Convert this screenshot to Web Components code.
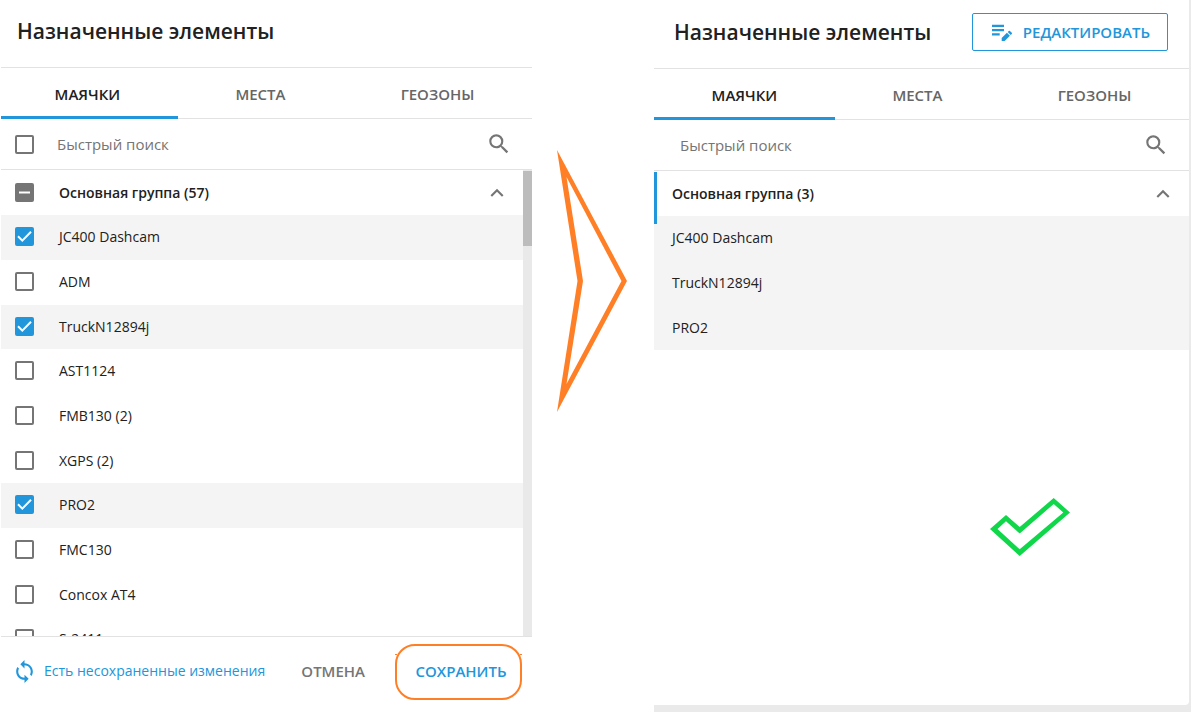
<!DOCTYPE html>
<html lang="ru">
<head>
<meta charset="utf-8">
<title>Назначенные элементы</title>
<style>
  html { --blue: #2196db; --ink: #212121; --muted: #757575; --line: #e2e2e2; --mark: #ff7f27; }
  body { margin: 0; background: #fff; color: var(--ink); font: 14px/20px "Open Sans", "Noto Sans", sans-serif; }
</style>
</head>
<body>
<assign-page></assign-page>

<script>
const ICONS = {
  search: '<path d="M15.5 14h-.79l-.28-.27A6.47 6.47 0 0 0 16 9.5 6.5 6.5 0 1 0 9.5 16c1.61 0 3.09-.59 4.23-1.57l.27.28v.79l5 4.99L20.49 19l-4.99-5zm-6 0C7.01 14 5 11.99 5 9.5S7.01 5 9.5 5 14 7.01 14 9.5 11.99 14 9.5 14z"/>',
  up: '<path d="M12 8l-6 6 1.41 1.41L12 10.83l4.59 4.58L18 14z"/>',
  sync: '<path d="M12 4V1L8 5l4 4V6c3.31 0 6 2.69 6 6 0 1.01-.25 1.97-.7 2.8l1.46 1.46C19.54 15.03 20 13.57 20 12c0-4.42-3.58-8-8-8zm0 14c-3.31 0-6-2.69-6-6 0-1.01.25-1.97.7-2.8L5.24 7.74C4.46 8.97 4 10.43 4 12c0 4.42 3.58 8 8 8v3l4-4-4-4v3z"/>',
  edit: '<path d="M2 4.800h12v2.200H2zM2 9h12v2.200H2zM2 13.200h7.700v2.200H2zM11.700 18v3h3l5.200-5.200-3-3zM21.800 13.900a.8.8 0 0 0 0-1.100l-1.900-1.900a.8.8 0 0 0-1.100 0l-1.100 1.100 3 3z"/>'
};

class UiElement extends HTMLElement {
  connectedCallback() {
    if (this.shadowRoot) return;
    this.attachShadow({ mode: 'open' }).innerHTML = this.render();
  }
  attr(name, fallback = '') { return this.getAttribute(name) ?? fallback; }
}

customElements.define('ui-icon', class extends UiElement {
  render() {
    const size = this.attr('size', '24');
    return `<style>:host{display:block;flex:none}svg{display:block;fill:currentColor}</style>
      <svg width="${size}" height="${size}" viewBox="0 0 24 24" aria-hidden="true">${ICONS[this.attr('name')]}</svg>`;
  }
});

customElements.define('check-box', class extends UiElement {
  render() {
    return `<style>
        :host { display: block; flex: none; width: 19px; height: 19px; }
        label { display: grid; }
        input, svg { grid-area: 1 / 1; width: 19px; height: 19px; margin: 0; box-sizing: border-box; }
        input { appearance: none; border: 2px solid var(--muted); border-radius: 2px; background: #fff; }
        input:checked { background: var(--blue); border-color: var(--blue); }
        input:indeterminate { background: var(--muted); border-color: var(--muted); }
        svg { pointer-events: none; fill: none; stroke: #fff; stroke-width: 2; }
        svg path { display: none; }
        input:checked ~ svg .tick, input:indeterminate ~ svg .dash { display: inline; }
      </style>
      <label><input type="checkbox" aria-label="${this.attr('label')}" ${this.hasAttribute('checked') ? 'checked' : ''}>
      <svg viewBox="0 0 19 19"><path class="tick" d="M3 9.300l4.300 4.300 8.700-8.900"/><path class="dash" d="M4 9.500h11"/></svg></label>`;
  }
  connectedCallback() {
    super.connectedCallback();
    this.shadowRoot.querySelector('input').indeterminate = this.hasAttribute('mixed');
  }
});

customElements.define('panel-head', class extends UiElement {
  render() {
    return `<style>
        :host { display: flex; align-items: center; justify-content: space-between; box-sizing: border-box;
          height: 69px; padding: 0 21px 4px 20px; border-bottom: 1px solid var(--line); }
        h1 { margin: 0; font-size: 21px; line-height: 28px; font-weight: 600; white-space: nowrap; }
      </style><h1><slot></slot></h1><slot name="action"></slot>`;
  }
});

customElements.define('tab-bar', class extends UiElement {
  render() {
    const tabs = this.attr('tabs').split('|');
    return `<style>
        :host { display: flex; box-sizing: border-box; height: 51px; border-bottom: 1px solid var(--line); }
        button { flex: 1 1 auto; height: 51px; margin: 0; padding: 3px 0 0; border: 0; border-bottom: 3px solid transparent;
          background: none; color: #666; font: inherit; font-size: 15px; font-weight: 600; }
        button[aria-selected=true] { color: var(--ink); border-color: var(--blue); }
      </style>${tabs.map((t, i) => `<button role="tab" aria-selected="${i === 0}">${t}</button>`).join('')}`;
  }
});

customElements.define('search-row', class extends UiElement {
  render() {
    return `<style>
        :host { display: flex; align-items: center; box-sizing: border-box; height: 51px;
          padding: 0 20px 0 18px; border-bottom: 1px solid var(--line); }
        ::slotted(check-box) { margin-right: 15px; }
        input { flex: 1; min-width: 0; border: 0; outline: 0; padding: 0 8px; background: none; color: var(--ink);
          font: inherit; font-size: 15px; line-height: 20px; }
        input::placeholder { color: var(--muted); opacity: 1; }
        ui-icon { color: var(--muted); }
      </style><slot></slot><input type="text" aria-label="Быстрый поиск" placeholder="Быстрый поиск"><ui-icon name="search" size="26"></ui-icon>`;
  }
});

customElements.define('group-row', class extends UiElement {
  render() {
    return `<style>
        :host { display: flex; align-items: center; position: relative; box-sizing: border-box; height: 45px; padding: 0 13px 0 18px; }
        ::slotted(check-box) { margin-right: 25px; }
        b { flex: 1; font-weight: 600; }
        ui-icon { color: var(--muted); }
        :host([active])::before { content: ""; position: absolute; z-index: 1; left: 0; top: 1px; width: 3px; height: 52px; background: var(--blue); }
      </style><slot name="check"></slot><b><slot></slot></b><ui-icon name="up" size="26"></ui-icon>`;
  }
});

customElements.define('item-row', class extends UiElement {
  render() {
    return `<style>
        :host { display: flex; align-items: flex-start; box-sizing: border-box; height: 45px; padding: 12px 18px 0; }
        :host(:nth-of-type(3n)) { height: 44px; }
        :host([selected]) { background: #f4f4f4; }
        check-box { margin-right: 25px; }
      </style>${this.hasAttribute('plain') ? '' : `<check-box label="${this.textContent}" ${this.hasAttribute('selected') ? 'checked' : ''}></check-box>`}<span><slot></slot></span>`;
  }
});

customElements.define('scroll-list', class extends UiElement {
  render() {
    return `<style>
        :host { display: flex; flex: 1; min-height: 0; overflow: hidden; }
        .items { flex: 1; min-width: 0; }
        .track { width: 9px; background: #e9e9e9; padding-top: 1px; }
        .thumb { height: 75px; background: #bcbcbc; }
      </style><div class="items"><slot></slot></div><div class="track"><div class="thumb"></div></div>`;
  }
});

customElements.define('save-bar', class extends UiElement {
  render() {
    return `<style>
        :host { display: flex; align-items: center; border-top: 1px solid var(--line); padding: 7px 10px 13px 15px; }
        a { display: flex; align-items: center; gap: 7px; flex: 1; padding-bottom: 2px; color: var(--blue); text-decoration: none; white-space: nowrap; }
        button { border: 0; background: none; padding: 0 0 2px; font: inherit; font-size: 15px; font-weight: 600; }
        .cancel { color: var(--muted); margin-right: 30px; }
        .save { position: relative; box-sizing: border-box; width: 127px; height: 56px; padding-left: 5px;
          color: var(--blue); border: 2px solid var(--mark); border-radius: 20px; }
        .save::before, .save::after { content: ""; position: absolute; top: 8px; width: 2px; height: 1px; background: var(--mark); }
        .save::before { left: -2px; } .save::after { right: -2px; }
      </style>
      <a href="#"><ui-icon name="sync" size="25"></ui-icon><span>Есть несохраненные изменения</span></a>
      <button class="cancel">ОТМЕНА</button><button class="save">СОХРАНИТЬ</button>`;
  }
});

customElements.define('edit-button', class extends UiElement {
  render() {
    return `<style>
        :host { display: block; }
        button { display: flex; align-items: center; gap: 9px; height: 38px; padding: 0 17px; background: #fff;
          border: 1px solid var(--blue); border-radius: 2px; color: var(--blue); font: inherit; font-size: 15px; font-weight: 600; }
      </style><button><ui-icon name="edit" size="24"></ui-icon><span><slot></slot></span></button>`;
  }
});

customElements.define('assign-page', class extends UiElement {
  render() {
    const items = ['*JC400 Dashcam', 'ADM', '*TruckN12894j', 'AST1124', 'FMB130 (2)', 'XGPS (2)', '*PRO2', 'FMC130', 'Concox AT4', 'S-2411'];
    const row = n => n[0] === '*' ? `<item-row selected>${n.slice(1)}</item-row>` : `<item-row>${n}</item-row>`;
    return `<style>
        :host { display: grid; grid-template-columns: minmax(0, 531fr) 122px minmax(0, 537fr); box-sizing: border-box;
          height: 100vh; padding: 0 1px; }
        .before { overflow: hidden; min-height: 0; display: flex; }
        .before > section { flex: 1; min-width: 0; margin: -1px 0 0 -4px; }
        section { display: flex; flex-direction: column; min-height: 0; }
        .arrow { display: block; margin: 150px 0 0 25px; fill: var(--mark); }
        .after { display: grid; background: #eaeaea; padding: 0 2px 7px 0; margin-bottom: 1px; }
        .after > section { background: #fff; border-bottom-right-radius: 4px; }
        .done { display: block; margin: 148px 119px 0 auto; fill: #0fd749; }
      </style>
      <div class="before"><section>
        <panel-head>Назначенные элементы</panel-head>
        <tab-bar role="tablist" tabs="МАЯЧКИ|МЕСТА|ГЕОЗОНЫ"></tab-bar>
        <search-row><check-box label="Выбрать все"></check-box></search-row>
        <scroll-list>
          <group-row><check-box slot="check" label="Основная группа" mixed></check-box>Основная группа (57)</group-row>
          ${items.map(row).join('')}
        </scroll-list>
        <save-bar></save-bar>
      </section></div>
      <svg class="arrow" width="70" height="262" viewBox="0 0 70 262" aria-hidden="true">
        <path fill-rule="evenodd" d="M0 0L70 131 0 262 20.500 131zM9.500 27L26 131 9.500 234 64.500 131z"/></svg>
      <div class="after"><section>
        <panel-head>Назначенные элементы<edit-button slot="action">РЕДАКТИРОВАТЬ</edit-button></panel-head>
        <tab-bar role="tablist" tabs="МАЯЧКИ|МЕСТА|ГЕОЗОНЫ"></tab-bar>
        <search-row></search-row>
        <group-row active>Основная группа (3)</group-row>
        <div>
          <item-row plain selected>JC400 Dashcam</item-row>
          <item-row plain selected>TruckN12894j</item-row>
          <item-row plain selected>PRO2</item-row>
        </div>
        <svg class="done" width="80" height="58" viewBox="0 0 80 58" aria-hidden="true">
          <path fill-rule="evenodd" d="M0 31L16 17 29.700 29 63.700 0 80 14.500 29.700 58zM7.500 31L29.700 51.300 73.300 14.500 63.700 6 29.700 35.500 16 23.300z"/></svg>
      </section></div>`;
  }
});
</script>
</body>
</html>
